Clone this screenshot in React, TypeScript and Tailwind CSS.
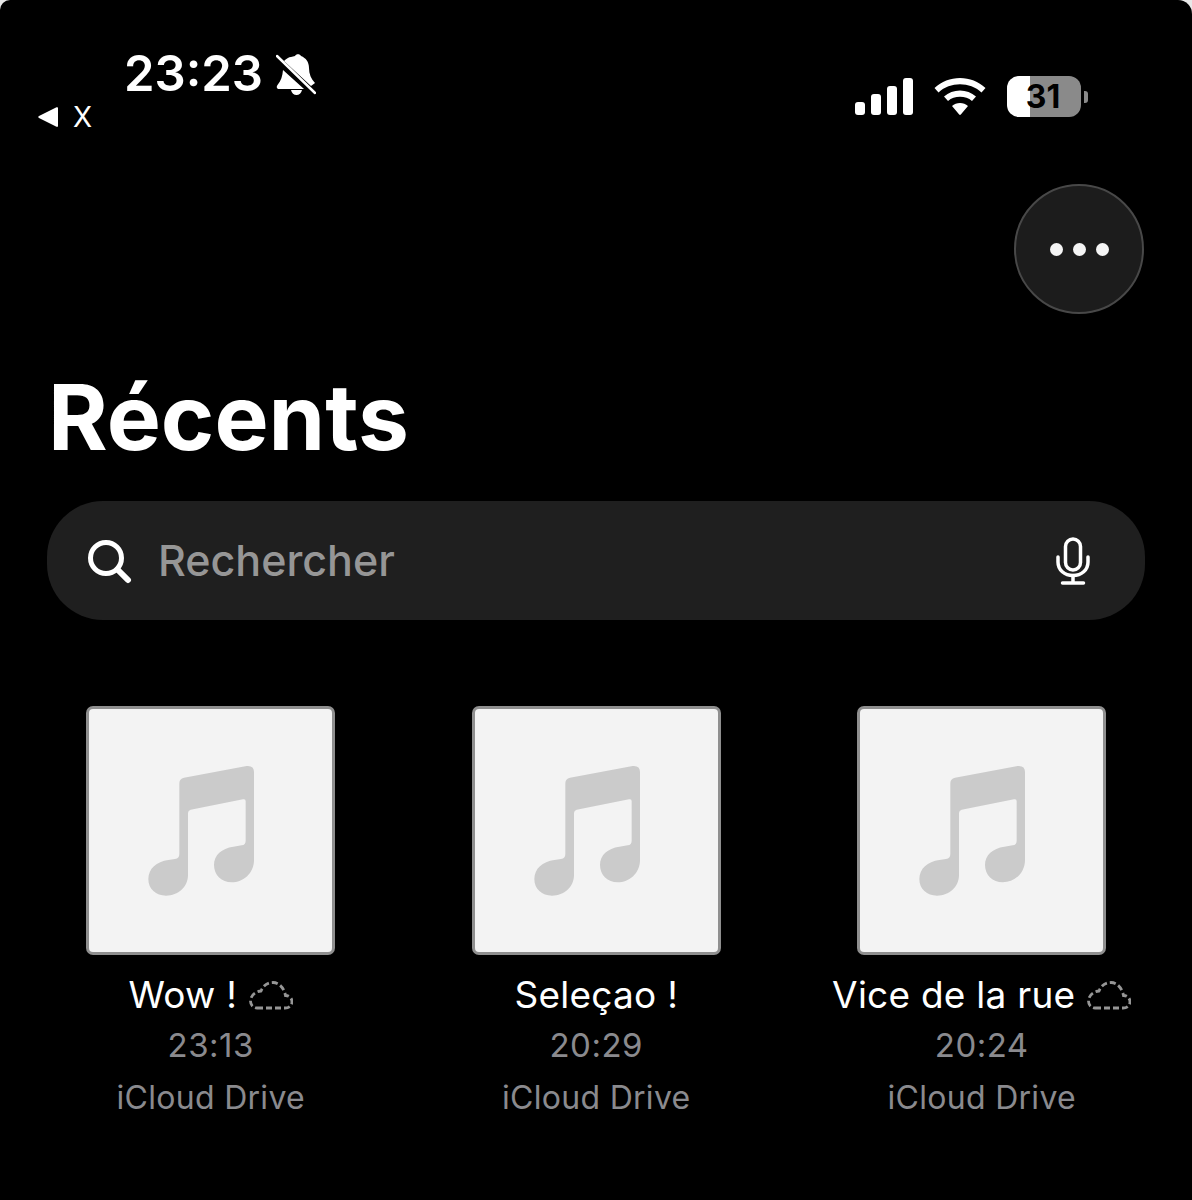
const font = { fontFamily: "Inter, 'Liberation Sans', sans-serif" };

function Note() {
  return (
    <svg viewBox="48 48 747 747" className="absolute -inset-[3px] h-[249px] w-[249px]">
      <path
        fill="#cbcbcb"
        d="M328 280 Q328 266 342 263 L530 228 Q552 226 552 246 L552 510 C552 550 520 577 485 577 C455 577 432 555 432 525 C432 495 455 475 490 470 L515 466 Q527 464 527 452 L527 334 Q527 326 519 328 L362 359 Q354 361 354 369 L354 555 C354 590 325 617 288 617 C258 617 235 597 235 568 C235 535 260 515 295 510 L315 507 Q328 505 328 492 Z"
      />
    </svg>
  );
}

function Cloud() {
  return (
    <svg viewBox="0 0 44 29" className="h-[29px] w-[44px] shrink-0">
      <path
        d="M8 27 H36 C40 27 43 24.500 43 21 C43 17 40 14.500 36.500 14.500 C35 7 30 1.500 24 1.500 C18 1.500 14 5 12 10 C6 10.500 1.500 15 1.500 20 C1.500 24 4 27 8 27 Z"
        fill="none"
        stroke="#969696"
        strokeWidth="2.800"
        strokeDasharray="6 3"
      />
    </svg>
  );
}

function Item({ title, time, cloud }: { title: string; time: string; cloud?: boolean }) {
  return (
    <div className="flex flex-col items-center">
      <div className="relative h-[249px] w-[249px] rounded-[7px] border-[3px] border-[#8f8f8f] bg-[#f3f3f3]">
        <Note />
      </div>
      <div className="mt-[20px] flex h-[40px] items-center gap-[12px] text-[37px] leading-[40px] tracking-[0.25px] text-white">
        <span className="whitespace-nowrap">{title}</span>
        {cloud && <Cloud />}
      </div>
      <div className="mt-[10px] h-[40px] text-[33px] leading-[40px] tracking-[0.5px] text-[#8a8a8e]">{time}</div>
      <div className="mt-[13px] h-[40px] whitespace-nowrap text-[32px] leading-[40px] tracking-[0.3px] text-[#8a8a8e]">
        iCloud Drive
      </div>
    </div>
  );
}

export default function App() {
  return (
    <div style={font} className="h-[1200px] w-[1192px] overflow-hidden bg-[#e8e8e8]">
      <div className="h-[1200px] rounded-tl-[10px] rounded-tr-[14px] bg-black">
        <div className="flex h-[184px] items-start justify-between pl-[38px] pr-[104px]">
          <div className="flex flex-col pt-[44px]">
            <div className="ml-[86px] flex items-center gap-[13px]">
              <span className="text-[49px] font-semibold leading-[60px] text-white">23:23</span>
              <svg viewBox="0 0 40 42" className="h-[42px] w-[40px]">
                <path
                  fill="#fff"
                  d="M19 3 C20 0.500 24 0.500 25 3 C30 5 33 9 33 15 C33 21 35 26 39 30 L35 33 L8 8 C10 6 13 4 15 4 Z M7 17 L28 36 H3 C1 36 0 34 1.500 32 C5 28 6.500 23 7 17 Z M15 37 H26 C25.500 40 23 42 20.500 42 C18 42 15.500 40 15 37 Z"
                />
                <path d="M1 6 L36 40" stroke="#000" strokeWidth="3" />
                <path d="M1 3 L39 40" stroke="#fff" strokeWidth="2.500" strokeLinecap="round" />
              </svg>
            </div>
            <div className="flex items-center gap-[15px]">
              <svg viewBox="0 0 20 20" className="h-[20px] w-[20px]">
                <path fill="#fff" d="M20 1 C20 0 19 0 18.500 0.300 L1 9 C0 9.500 0 10.500 1 11 L18.500 19.700 C19 20 20 20 20 19 Z" />
              </svg>
              <span className="text-[28px] leading-[26px] text-white">X</span>
            </div>
          </div>
          <div className="flex items-center pt-[76px]">
            <svg viewBox="0 0 58 37" className="h-[37px] w-[58px]">
              <rect x="0" y="24" width="10" height="13" rx="3" fill="#fff" />
              <rect x="16" y="16" width="10" height="21" rx="3" fill="#fff" />
              <rect x="32" y="8" width="10" height="29" rx="3" fill="#fff" />
              <rect x="48" y="0" width="10" height="37" rx="3" fill="#fff" />
            </svg>
            <svg viewBox="0 0 52 37" className="ml-[21px] h-[37px] w-[52px]">
              <path fill="#fff" d="M26 0 C35.500 0 44.500 3.500 51.500 10 L47.500 14.500 C41.500 9 34 6.300 26 6.300 C18 6.300 10.500 9 4.500 14.500 L0.500 10 C7.500 3.500 16.500 0 26 0 Z" />
              <path fill="#fff" d="M26 12.500 C32 12.500 37.500 14.500 42 18.500 L38 23 C34.800 20.200 30.500 18.800 26 18.800 C21.500 18.800 17.200 20.200 14 23 L10 18.500 C14.500 14.500 20 12.500 26 12.500 Z" />
              <path fill="#fff" d="M26 25 C29 25 31.800 26 34 28 L26.800 36.500 C26.400 37 25.600 37 25.200 36.500 L18 28 C20.200 26 23 25 26 25 Z" />
            </svg>
            <div className="ml-[21px] flex h-[41px] w-[74px] items-center justify-center rounded-[12px] bg-[linear-gradient(90deg,#ffffff_31%,#8a8a8a_31%)] text-[32px] font-bold leading-none text-black">
              <span className="mr-[2px]">31</span>
            </div>
            <div className="ml-[3px] h-[12px] w-[4px] rounded-r-[3px] bg-[#8a8a8a]" />
          </div>
        </div>

        <div className="flex justify-end pr-[48px]">
          <div className="flex h-[130px] w-[130px] items-center justify-center gap-[10px] rounded-full border-[2px] border-[#484848] bg-[#1c1c1c]">
            <span className="h-[13px] w-[13px] rounded-full bg-[#f5f5f5]" />
            <span className="h-[13px] w-[13px] rounded-full bg-[#f5f5f5]" />
            <span className="h-[13px] w-[13px] rounded-full bg-[#f5f5f5]" />
          </div>
        </div>

        <h1 className="ml-[48px] mt-[53px] text-[91px] font-bold leading-[100px] text-white">Récents</h1>

        <div className="ml-[47px] mt-[34px] flex h-[119px] w-[1098px] items-center rounded-[56px] bg-[#1f1f1f] pl-[39px] pr-[55px]">
          <svg viewBox="0 0 46 46" className="h-[46px] w-[46px]">
            <circle cx="20" cy="20" r="15.500" fill="none" stroke="#fff" strokeWidth="5" />
            <path d="M31.500 31.500 L42 42" stroke="#fff" strokeWidth="6" strokeLinecap="round" />
          </svg>
          <span className="ml-[26px] flex-1 text-[43px] font-medium leading-none text-[#969696]">Rechercher</span>
          <svg viewBox="0 0 34 48" className="h-[48px] w-[34px]">
            <rect x="9.500" y="2" width="15" height="31" rx="7.500" fill="none" stroke="#fff" strokeWidth="3.500" />
            <path d="M2 20 V25 C2 33 8.500 38.500 17 38.500 C25.500 38.500 32 33 32 25 V20" fill="none" stroke="#fff" strokeWidth="3.500" strokeLinecap="round" />
            <path d="M17 38.500 V45.500 M6.500 46 H27.500" fill="none" stroke="#fff" strokeWidth="3.500" strokeLinecap="round" />
          </svg>
        </div>

        <div className="ml-[18px] mt-[86px] grid grid-cols-[385.5px_385.5px_385.5px]">
          <Item title="Wow !" time="23:13" cloud />
          <Item title="Seleçao !" time="20:29" />
          <Item title="Vice de la rue" time="20:24" cloud />
        </div>
      </div>
    </div>
  );
}
